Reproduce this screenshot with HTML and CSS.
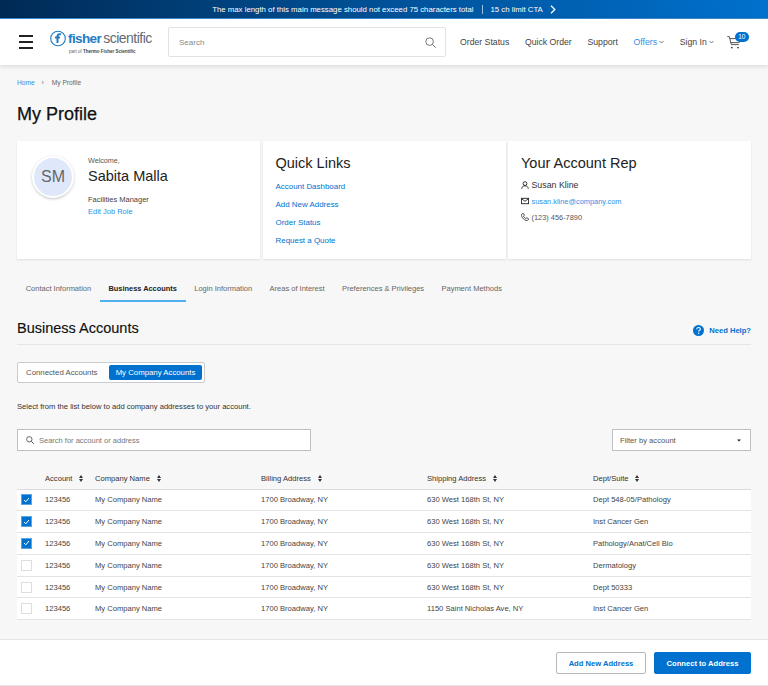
FILE: index.html
```html
<!DOCTYPE html>
<html lang="en">
<head>
<meta charset="utf-8">
<title>My Profile</title>
<link rel="stylesheet" href="styles.css">
</head>
<body>
<div class="banner">
  <span>The max length of this main message should not exceed 75 characters total</span>
  <span class="banner-sep"></span>
  <span>15 ch limit CTA</span>
  <svg class="banner-arrow" width="6" height="9" viewBox="0 0 6 9"><path d="M1 .8 4.800 4.500 1 8.200" fill="none" stroke="#fff" stroke-width="1.300"/></svg>
</div>
<header class="header">
  <svg class="burger" width="14" height="14" viewBox="0 0 14 14"><path d="M0 1h14M0 7h14M0 13h14" stroke="#222" stroke-width="1.800"/></svg>
  <div class="logo">
    <svg class="logo-mark" width="16" height="17" viewBox="0 0 16 17"><circle cx="8" cy="8.500" r="7.300" fill="none" stroke="#1f7cc4" stroke-width="1.100"/><path d="M11 4.400c-2-.5-3.300 0-3.500 1.800V13M5 7.600h5" fill="none" stroke="#1f7cc4" stroke-width="2"/></svg>
    <div class="logo-words">
      <div class="logo-name"><span class="logo-fisher">fisher</span><span class="logo-sci">scientific</span></div>
      <div class="logo-part">part of <b>Thermo Fisher Scientific</b></div>
    </div>
  </div>
  <div class="site-search">
    <span>Search</span>
    <svg width="11" height="11" viewBox="0 0 11 11"><circle cx="4.600" cy="4.600" r="3.800" fill="none" stroke="#666" stroke-width=".9"/><path d="m7.400 7.400 3.200 3.200" stroke="#666" stroke-width="1"/></svg>
  </div>
  <nav class="nav">
    <a>Order Status</a>
    <a>Quick Order</a>
    <a>Support</a>
    <a class="nav-blue">Offers<svg width="5" height="4" viewBox="0 0 5 4"><path d="m.5 1 2 2 2-2" fill="none" stroke="#555" stroke-width=".8"/></svg></a>
    <a>Sign In<svg width="5" height="4" viewBox="0 0 5 4"><path d="m.5 1 2 2 2-2" fill="none" stroke="#555" stroke-width=".8"/></svg></a>
  </nav>
  <div class="cart">
    <svg width="14" height="13" viewBox="0 0 14 13"><path d="M.3.600h2l2 8h7.500M2.800 2.600l10.700 0-1.300 4H3.800" fill="none" stroke="#444" stroke-width=".9"/><circle cx="4.800" cy="11.600" r=".95" fill="#444"/><circle cx="11" cy="11.600" r=".95" fill="#444"/></svg>
    <span class="badge">10</span>
  </div>
</header>
<main class="main">
  <div class="crumbs"><a>Home</a><span class="crumb-sep">›</span><span>My Profile</span></div>
  <h1 class="title">My Profile</h1>
  <section class="cards">
    <div class="card card-user">
      <div class="avatar">SM</div>
      <div>
        <div class="welcome">Welcome,</div>
        <div class="user-name">Sabita Malla</div>
        <div class="role">Facilities Manager</div>
        <a class="link edit-role">Edit Job Role</a>
      </div>
    </div>
    <div class="card">
      <h2 class="card-title">Quick Links</h2>
      <div class="quick-links">
        <a class="link">Account Dashboard</a>
        <a class="link">Add New Address</a>
        <a class="link">Order Status</a>
        <a class="link">Request a Quote</a>
      </div>
    </div>
    <div class="card">
      <h2 class="card-title">Your Account Rep</h2>
      <div class="rep-row rep-name">
        <svg width="8" height="8" viewBox="0 0 8 8"><circle cx="4" cy="2.600" r="1.900" fill="none" stroke="#222" stroke-width=".9"/><path d="M.7 7.800c.3-2 1.300-3 3.300-3s3 1 3.300 3" fill="none" stroke="#222" stroke-width=".9"/></svg>
        <span>Susan Kline</span>
      </div>
      <div class="rep-row">
        <svg width="8" height="8" viewBox="0 0 8 8"><rect x=".4" y="1.300" width="7.200" height="5.400" fill="none" stroke="#222" stroke-width=".9"/><path d="m.5 1.700 3.500 2.600 3.500-2.600" fill="none" stroke="#222" stroke-width=".9"/></svg>
        <a class="link-light">susan.kline@company.com</a>
      </div>
      <div class="rep-row">
        <svg width="8" height="8" viewBox="0 0 8 8"><path d="M1.300.6C.2 1.500.2 3 1.500 4.800s3 2.900 4.800 2.600c1-.2 1.400-.8 1.300-1.500L5.800 4.700 4.800 5.600C3.800 5 3 4.200 2.500 3.100l.9-.9L2.300.5z" fill="none" stroke="#222" stroke-width=".8"/></svg>
        <span>(123) 456-7890</span>
      </div>
    </div>
  </section>
  <nav class="tabs">
    <a class="tab">Contact Information</a>
    <a class="tab tab-active">Business Accounts</a>
    <a class="tab">Login Information</a>
    <a class="tab">Areas of Interest</a>
    <a class="tab">Preferences &amp; Privileges</a>
    <a class="tab">Payment Methods</a>
  </nav>
  <div class="section-head">
    <h2 class="section-title">Business Accounts</h2>
    <a class="help">
      <svg width="11" height="11" viewBox="0 0 11 11"><circle cx="5.500" cy="5.500" r="5.500" fill="#0071ce"/><path d="M3.700 4.200c.1-1.100.9-1.700 1.900-1.700s1.800.6 1.800 1.500c0 1.300-1.700 1.300-1.700 2.600" fill="none" stroke="#fff" stroke-width="1.100"/><circle cx="5.600" cy="8.300" r=".75" fill="#fff"/></svg>
      <span>Need Help?</span>
    </a>
  </div>
  <div class="toggle">
    <span class="toggle-item">Connected Accounts</span>
    <span class="toggle-item toggle-on">My Company Accounts</span>
  </div>
  <p class="intro">Select from the list below to add company addresses to your account.</p>
  <div class="filters">
    <div class="table-search">
      <svg width="8" height="8" viewBox="0 0 8 8"><circle cx="3.300" cy="3.300" r="2.700" fill="none" stroke="#444" stroke-width=".8"/><path d="m5.300 5.300 2.500 2.500" stroke="#444" stroke-width=".9"/></svg>
      <span>Search for account or address</span>
    </div>
    <div class="filter-select">
      <span>Filter by account</span>
      <svg width="4" height="3" viewBox="0 0 4 3"><path d="M0 .4h4L2 2.600z" fill="#222"/></svg>
    </div>
  </div>
  <table class="accounts">
    <colgroup>
      <col class="col-check"><col class="col-account"><col class="col-wide"><col class="col-wide"><col class="col-wide"><col>
    </colgroup>
    <thead>
      <tr>
        <th></th>
        <th>Account<svg class="sort" width="4" height="7" viewBox="0 0 4 7"><path d="M2 0 4 3H0zM2 7 0 4h4z" fill="#333"/></svg></th>
        <th>Company Name<svg class="sort" width="4" height="7" viewBox="0 0 4 7"><path d="M2 0 4 3H0zM2 7 0 4h4z" fill="#333"/></svg></th>
        <th>Billing Address<svg class="sort" width="4" height="7" viewBox="0 0 4 7"><path d="M2 0 4 3H0zM2 7 0 4h4z" fill="#333"/></svg></th>
        <th>Shipping Address<svg class="sort" width="4" height="7" viewBox="0 0 4 7"><path d="M2 0 4 3H0zM2 7 0 4h4z" fill="#333"/></svg></th>
        <th>Dept/Suite<svg class="sort" width="4" height="7" viewBox="0 0 4 7"><path d="M2 0 4 3H0zM2 7 0 4h4z" fill="#333"/></svg></th>
      </tr>
    </thead>
    <tbody>
      <tr><td><span class="check check-on"><svg width="7" height="6" viewBox="0 0 7 6"><path d="m1 3 1.800 1.800L6 1" fill="none" stroke="#fff" stroke-width="1"/></svg></span></td><td>123456</td><td>My Company Name</td><td>1700 Broadway, NY</td><td>630 West 168th St, NY</td><td>Dept 548-05/Pathology</td></tr>
      <tr><td><span class="check check-on"><svg width="7" height="6" viewBox="0 0 7 6"><path d="m1 3 1.800 1.800L6 1" fill="none" stroke="#fff" stroke-width="1"/></svg></span></td><td>123456</td><td>My Company Name</td><td>1700 Broadway, NY</td><td>630 West 168th St, NY</td><td>Inst Cancer Gen</td></tr>
      <tr><td><span class="check check-on"><svg width="7" height="6" viewBox="0 0 7 6"><path d="m1 3 1.800 1.800L6 1" fill="none" stroke="#fff" stroke-width="1"/></svg></span></td><td>123456</td><td>My Company Name</td><td>1700 Broadway, NY</td><td>630 West 168th St, NY</td><td>Pathology/Anat/Cell Bio</td></tr>
      <tr><td><span class="check"></span></td><td>123456</td><td>My Company Name</td><td>1700 Broadway, NY</td><td>630 West 168th St, NY</td><td>Dermatology</td></tr>
      <tr><td><span class="check"></span></td><td>123456</td><td>My Company Name</td><td>1700 Broadway, NY</td><td>630 West 168th St, NY</td><td>Dept 50333</td></tr>
      <tr><td><span class="check"></span></td><td>123456</td><td>My Company Name</td><td>1700 Broadway, NY</td><td>1150 Saint Nicholas Ave, NY</td><td>Inst Cancer Gen</td></tr>
    </tbody>
  </table>
</main>
<footer class="footer">
  <button class="btn btn-outline">Add New Address</button>
  <button class="btn btn-solid">Connect to Address</button>
</footer>
</body>
</html>
```

FILE: styles.css
```css
* { box-sizing: border-box; }
html, body { margin: 0; padding: 0; }
body {
  width: 768px;
  background: #f7f7f7;
  color: #333;
  font-family: "Liberation Sans", Arial, sans-serif;
  font-size: 8px;
}
a { color: inherit; text-decoration: none; }
h1, h2, p { margin: 0; font-weight: 400; }

.banner {
  height: 19px;
  display: flex;
  align-items: center;
  justify-content: center;
  color: #fff;
  font-size: 7.800px;
  background: linear-gradient(90deg, #002a55 0%, #004a8c 40%, #0071ce 100%);
  border-bottom: 1px solid #3d8fd6;
}
.banner-sep { width: 1px; height: 9px; background: #9fc2e3; margin: 0 8px; }
.banner-arrow { margin-left: 7px; }

.header {
  position: relative;
  height: 46px;
  display: flex;
  align-items: center;
  background: #fff;
  box-shadow: 0 1px 5px rgba(0, 0, 0, .14);
}
.burger { margin-left: 19px; flex: none; }
.logo { flex: none; display: flex; align-items: flex-start; gap: 2px; margin-left: 17px; width: 103px; margin-top: -1px; }
.logo-mark { flex: none; }
.logo-name { line-height: 16px; white-space: nowrap; }
.logo-fisher { color: #1f7cc4; font-weight: 700; font-size: 13.500px; letter-spacing: -.6px; margin-right: 2px; }
.logo-sci { color: #5f6b73; font-size: 14px; letter-spacing: -.5px; }
.logo-part { font-size: 4.500px; line-height: 5px; color: #666; padding-left: 1px; white-space: nowrap; }
.logo-part b { color: #444; }
.site-search {
  flex: none;
  width: 278px;
  height: 30px;
  margin-left: 15px;
  padding: 0 9px 0 10px;
  display: flex;
  align-items: center;
  justify-content: space-between;
  font-size: 8px;
  color: #888;
  background: #fff;
  border: 1px solid #e2e2e2;
  border-radius: 2px;
}
.nav { display: flex; gap: 15.700px; margin-left: 14px; font-size: 8.700px; color: #444; }
.nav a { display: flex; align-items: center; gap: 2px; white-space: nowrap; }
.nav .nav-blue { color: #2f8fe6; }
.cart { position: relative; margin-left: 13px; width: 14px; height: 13px; margin-top: 1px; }
.cart svg { display: block; }
.badge {
  position: absolute;
  left: 8px;
  top: -4px;
  width: 14px;
  height: 10px;
  border-radius: 5px;
  background: #0071ce;
  color: #fff;
  font-size: 6.500px;
  line-height: 10px;
  text-align: center;
}

.main { padding: 0 17px; }
.crumbs { display: flex; align-items: center; padding-top: 12px; height: 22px; font-size: 6.600px; color: #666; }
.crumbs a { color: #2f8fe6; }
.crumb-sep { margin: 0 8px 0 7px; }
.title { margin-top: 15px; font-size: 18px; line-height: 24px; font-weight: 400; color: #111; -webkit-text-stroke: .25px #111; }

.cards { display: grid; grid-template-columns: 243px 243px 243px; column-gap: 2.500px; margin-top: 15px; }
.card { height: 118px; padding: 14px 13px; background: #fff; box-shadow: 0 1px 2px rgba(0, 0, 0, .1); }
.card-user { display: flex; align-items: flex-start; gap: 14px; padding: 15px 15px; }
.avatar {
  flex: none;
  width: 42px;
  height: 42px;
  display: flex;
  align-items: center;
  justify-content: center;
  border: 2px solid #fff;
  border-radius: 50%;
  background: #dfe8fb;
  box-shadow: 0 1px 3px rgba(0, 0, 0, .22);
  color: #666;
  font-size: 16px;
}
.welcome { font-size: 7.200px; line-height: 9px; color: #555; }
.user-name { font-size: 14.500px; line-height: 18px; margin-top: 2px; color: #222; }
.role { margin-top: 10px; font-size: 7.500px; line-height: 10px; color: #444; }
.link { color: #0071ce; }
.edit-role { display: block; margin-top: 2px; font-size: 7.500px; line-height: 10px; color: #2f8fe6; }
.card-title { font-size: 14.500px; line-height: 16px; color: #222; }
.quick-links { display: flex; flex-direction: column; gap: 8px; margin-top: 11px; font-size: 7.950px; line-height: 10px; }
.rep-row { display: flex; align-items: center; gap: 2.500px; height: 16px; font-size: 7.400px; color: #555; }
.rep-name { margin-top: 6px; font-size: 8.800px; color: #333; }
.link-light { color: #2f8fe6; }

.tabs { display: flex; margin-top: 18px; height: 25px; font-size: 7.500px; color: #666; }
.tab { padding: 7px 8.700px 0; line-height: 10px; white-space: nowrap; }
.tab-active { color: #222; font-weight: 700; font-size: 7.400px; border-bottom: 2px solid #4fb0f0; }

.section-head {
  display: flex;
  align-items: center;
  justify-content: space-between;
  margin-top: 15px;
  height: 28px;
  padding-bottom: 5px;
  border-bottom: 1px solid #e6e6e6;
}
.section-title { font-size: 14.500px; line-height: 18px; color: #111; -webkit-text-stroke: .15px #111; }
.help { display: flex; align-items: center; gap: 5px; padding-top: 4px; color: #0071ce; font-size: 7.600px; font-weight: 700; }
.toggle {
  display: inline-flex;
  align-items: stretch;
  width: 188px;
  height: 21px;
  margin-top: 17px;
  padding: 2px;
  gap: 4px;
  background: #fff;
  border: 1px solid #c8ccd0;
  border-radius: 2px;
  font-size: 7.800px;
}
.toggle-item { flex: 1; display: flex; align-items: center; padding-left: 6px; color: #555; white-space: nowrap; }
.toggle-on { flex: none; width: 93px; justify-content: center; padding: 0; border-radius: 2px; background: #0071ce; color: #fff; }
.intro { margin-top: 18px; font-size: 7.600px; line-height: 11px; color: #333; }
.filters { display: flex; justify-content: space-between; margin-top: 17px; }
.table-search, .filter-select {
  height: 22px;
  display: flex;
  align-items: center;
  background: #fff;
  border: 1px solid #bcc0c4;
  color: #777;
}
.table-search { width: 294px; padding-left: 8px; gap: 5px; font-size: 7.500px; }
.filter-select { width: 139px; padding: 0 9px 0 7px; justify-content: space-between; color: #555; font-size: 7.600px; }

.accounts { width: 734px; margin-top: 17px; border-collapse: collapse; table-layout: fixed; font-size: 7.600px; }
.col-check { width: 28px; }
.col-account { width: 50px; }
.col-wide { width: 166px; }
.accounts th {
  height: 21px;
  padding: 0;
  text-align: left;
  font-weight: 400;
  color: #333;
  white-space: nowrap;
  border-bottom: 1px solid #dcdcdc;
}
.accounts td {
  height: 21.800px;
  padding: 0;
  background: #fff;
  color: #444;
  white-space: nowrap;
  border-bottom: 1px solid #e4e4e4;
}
.sort { margin-left: 7px; vertical-align: -1px; }
.check {
  display: flex;
  align-items: center;
  justify-content: center;
  width: 11px;
  height: 11px;
  margin-left: 4px;
  border: 1px solid #dedede;
  background: #fff;
}
.check-on { background: #0071ce; border-color: #5aa5e3; }

.footer {
  display: flex;
  justify-content: flex-end;
  gap: 8px;
  height: 47px;
  margin-top: 19px;
  padding: 12px 17px 0;
  background: #fff;
  border-top: 1px solid #e4e4e4;
  border-bottom: 1px solid #e4e4e4;
}
.btn {
  height: 22px;
  border-radius: 2px;
  font-family: inherit;
  font-size: 7.600px;
  font-weight: 700;
  padding: 0;
}
.btn-outline { width: 90px; background: #fff; border: 1px solid #b5b9bd; color: #0071ce; }
.btn-solid { width: 97px; background: #0071ce; border: 1px solid #0071ce; color: #fff; }
```
